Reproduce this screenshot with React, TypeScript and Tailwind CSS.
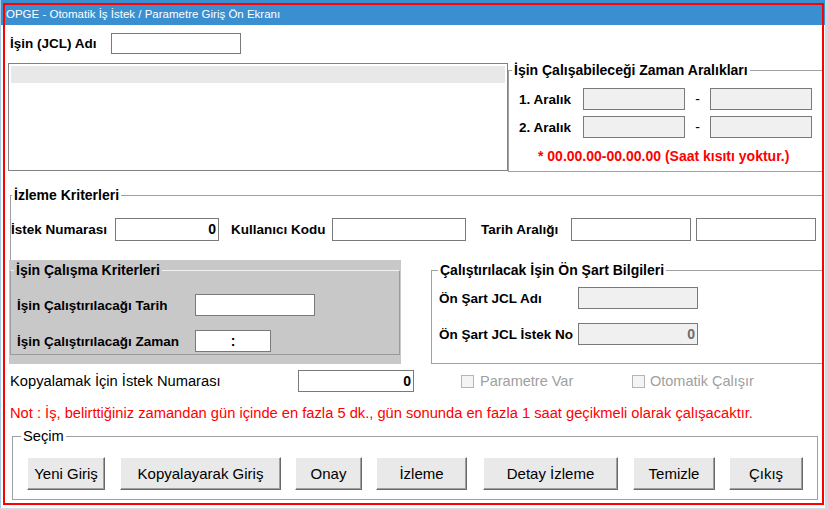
import React from "react";

const inputBase = "h-[22px] border border-[#7a7a7a] bg-white";
const disabledInput = "h-[22px] border border-[#7a7a7a] bg-[#f0f0f0]";
const label = "font-bold text-[13.5px] leading-[15px] text-black whitespace-nowrap";
const legend = "font-bold text-[14px] leading-[16px] text-black whitespace-nowrap";

function Btn({ w, ml, children }: { w: string; ml: string; children: React.ReactNode }) {
  return (
    <div
      className={`${w} ${ml} h-[33px] flex items-center justify-center bg-[#e9e9e9] border border-t-white border-l-white border-b-[#696969] border-r-[#696969] shadow-[inset_-1px_-1px_0_#a0a0a0] text-[15px] leading-[17px] text-black whitespace-nowrap`}
    >
      {children}
    </div>
  );
}

export default function App() {
  return (
    <div className="relative w-[828px] h-[510px] bg-[#d3dae1] overflow-hidden font-['Liberation_Sans',Arial,sans-serif] text-black">
      <div className="w-[825px] h-[508px] bg-white border-l border-l-[#a9c9e8] flex flex-col">
        {/* title bar */}
        <div className="h-[25px] shrink-0 bg-[#3a8fd1] text-white text-[11.5px] leading-[14px] pl-[5px] pt-[7px] whitespace-nowrap">
          OPGE - Otomatik İş İstek / Parametre Giriş Ön Ekranı
        </div>

        {/* row 1 */}
        <div className="mt-[8px] h-[21px] flex items-center">
          <div className={`${label} pl-[9px] w-[110px]`}>İşin (JCL) Adı</div>
          <div className="w-[130px] h-[21px] border border-[#7a7a7a] bg-white" />
        </div>

        {/* row 2 */}
        <div className="mt-[9px] flex items-start">
          <div className="ml-[7px] w-[500px] h-[108px] border border-[#828282] p-[2px]">
            <div className="h-[17px] bg-[#e8e8e8]" />
          </div>
          <fieldset className="-mt-[1px] w-[316px] h-[110px] border border-[#a0a0a0]">
            <legend className={`${legend} ml-[3px] px-[2px]`}>İşin Çalışabileceği Zaman Aralıkları</legend>
            <div className="pt-[10px]">
              <div className="h-[22px] flex items-center pl-[10px]">
                <div className={`${label} w-[64px]`}>1. Aralık</div>
                <div className={`${disabledInput} w-[102px]`} />
                <div className="w-[25px] text-center text-[14px]">-</div>
                <div className={`${disabledInput} w-[102px]`} />
              </div>
              <div className="mt-[6px] h-[22px] flex items-center pl-[10px]">
                <div className={`${label} w-[64px]`}>2. Aralık</div>
                <div className={`${disabledInput} w-[102px]`} />
                <div className="w-[25px] text-center text-[14px]">-</div>
                <div className={`${disabledInput} w-[102px]`} />
              </div>
              <div className="mt-[11px] pl-[29px] font-bold text-[14px] leading-[15px] text-[#ff0000] whitespace-nowrap">
                * 00.00.00-00.00.00 (Saat kısıtı yoktur.)
              </div>
            </div>
          </fieldset>
        </div>

        {/* izleme kriterleri */}
        <fieldset className="mt-[15px] ml-[9px] w-[814px] h-[73px] border border-b-0 border-[#a0a0a0] shrink-0">
          <legend className={`${legend} ml-[1px] px-[2px]`}>İzleme Kriterleri</legend>
          <div className="mt-[15px] h-[23px] flex items-center">
            <div className={`${label} w-[104px]`}>İstek Numarası</div>
            <div className="w-[104px] h-[23px] border border-[#7a7a7a] bg-white flex items-center justify-end pr-[2px] font-bold text-[14px]">0</div>
            <div className={`${label} ml-[12px] w-[101px]`}>Kullanıcı Kodu</div>
            <div className="w-[134px] h-[23px] border border-[#7a7a7a] bg-white" />
            <div className={`${label} ml-[15px] w-[90px]`}>Tarih Aralığı</div>
            <div className="w-[120px] h-[23px] border border-[#7a7a7a] bg-white" />
            <div className="ml-[5px] w-[120px] h-[23px] border border-[#7a7a7a] bg-white" />
          </div>
        </fieldset>

        {/* row 4 */}
        <div className="flex items-start shrink-0">
          <div className="ml-[8px] w-[392px] h-[104px] bg-[#c8c8c8] pt-[2px] pl-[1px]">
            <fieldset className="w-[390px] h-[93px] border border-[#9a9a9a] border-t-[#f2f2f2]">
              <legend className={`${legend} ml-[3px] px-[2px]`}>İşin Çalışma Kriterleri</legend>
              <div className="mt-[16px] h-[22px] flex items-center pl-[6px]">
                <div className={`${label} w-[178px]`}>İşin Çalıştırılacağı Tarih</div>
                <div className={`${inputBase} w-[120px]`} />
              </div>
              <div className="mt-[14px] h-[22px] flex items-center pl-[6px]">
                <div className={`${label} w-[178px]`}>İşin Çalıştırılacağı Zaman</div>
                <div className={`${inputBase} w-[76px] flex items-center justify-center font-bold text-[14px]`}>:</div>
              </div>
            </fieldset>
          </div>
          <fieldset className="ml-[30px] mt-[2px] w-[392px] h-[102px] border border-[#a0a0a0]">
            <legend className={`${legend} ml-[6px] px-[2px]`}>Çalıştırılacak İşin Ön Şart Bilgileri</legend>
            <div className="mt-[9px] h-[22px] flex items-center pl-[7px]">
              <div className={`${label} w-[139px]`}>Ön Şart JCL Adı</div>
              <div className={`${disabledInput} w-[120px]`} />
            </div>
            <div className="mt-[14px] h-[22px] flex items-center pl-[7px]">
              <div className={`${label} w-[139px]`}>Ön Şart JCL İstek No</div>
              <div className={`${disabledInput} w-[120px] flex items-center justify-end pr-[2px] font-bold text-[14px] text-[#6d6d6d]`}>0</div>
            </div>
          </fieldset>
        </div>

        {/* kopyalamak row */}
        <div className="mt-[6px] h-[22px] flex items-center shrink-0">
          <div className="pl-[9px] w-[297px] text-[14.7px] leading-[16px] whitespace-nowrap">Kopyalamak İçin İstek Numarası</div>
          <div className={`${inputBase} w-[116px] flex items-center justify-end pr-[2px] font-bold text-[14px]`}>0</div>
          <div className="ml-[47px] w-[171px] flex items-center">
            <div className="w-[13px] h-[13px] border border-[#b5b5b5] bg-[#f4f4f4]" />
            <div className="ml-[6px] text-[14.5px] leading-[16px] text-[#a0a0a0] whitespace-nowrap">Parametre Var</div>
          </div>
          <div className="flex items-center">
            <div className="w-[13px] h-[13px] border border-[#b5b5b5] bg-[#f4f4f4]" />
            <div className="ml-[5px] text-[14.5px] leading-[16px] text-[#a0a0a0] whitespace-nowrap">Otomatik Çalışır</div>
          </div>
        </div>

        {/* note */}
        <div className="mt-[13px] pl-[9px] text-[14.7px] leading-[16px] text-[#ff0000] whitespace-nowrap shrink-0">
          Not : İş, belirttiğiniz zamandan gün içinde en fazla 5 dk., gün sonunda en fazla 1 saat geçikmeli olarak çalışacaktır.
        </div>

        {/* seçim */}
        <fieldset className="mt-[7px] ml-[11px] w-[806px] h-[72px] border border-[#a0a0a0] shrink-0">
          <legend className="text-[14.7px] leading-[16px] ml-[8px] px-[2px]">Seçim</legend>
          <div className="mt-[13px] flex items-center">
            <Btn w="w-[78px]" ml="ml-[14px]">Yeni Giriş</Btn>
            <Btn w="w-[161px]" ml="ml-[15px]">Kopyalayarak Giriş</Btn>
            <Btn w="w-[67px]" ml="ml-[14px]">Onay</Btn>
            <Btn w="w-[91px]" ml="ml-[14px]">İzleme</Btn>
            <Btn w="w-[135px]" ml="ml-[16px]">Detay İzleme</Btn>
            <Btn w="w-[82px]" ml="ml-[15px]">Temizle</Btn>
            <Btn w="w-[74px]" ml="ml-[14px]">Çıkış</Btn>
          </div>
        </fieldset>
      </div>
      <div className="pointer-events-none absolute left-[3px] top-[3px] w-[821px] h-[502px] border-2 border-[#ff0000]" />
    </div>
  );
}
